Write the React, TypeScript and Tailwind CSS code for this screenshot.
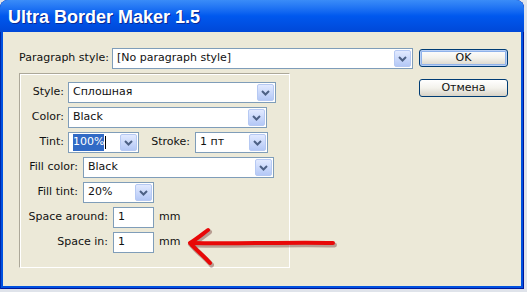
import React from "react";

const Chevron = () => (
  <svg width="9" height="6" viewBox="0 0 9 6">
    <path d="M1 1l3.5 3.5L8 1" fill="none" stroke="#4d6185" strokeWidth="2" />
  </svg>
);

function Select({
  width,
  children,
}: {
  width: string;
  children: React.ReactNode;
}) {
  return (
    <div className={`flex h-[21px] border border-[#7f9db9] bg-white ${width}`}>
      <div className="flex flex-1 items-center overflow-hidden pl-[4px] whitespace-nowrap">
        {children}
      </div>
      <div className="m-[1px] flex w-[17px] items-center justify-center rounded-[2px] border border-[#b6c9f3] bg-gradient-to-b from-[#e2eaff] to-[#b4c8f6]">
        <Chevron />
      </div>
    </div>
  );
}

function Input({ value }: { value: string }) {
  return (
    <div className="flex h-[21px] w-[41px] items-center border border-[#7f9db9] bg-white pl-[4px]">
      {value}
    </div>
  );
}

function XpButton({ label, main }: { label: string; main?: boolean }) {
  return (
    <div
      className={`flex h-[18px] w-[89px] items-center justify-center rounded-[3px] border border-[#003c74] bg-gradient-to-b from-[#ffffff] via-[#f3f2ec] to-[#d8d3c7] ${
        main ? "shadow-[inset_0_0_0_1px_#b9d0f5,inset_0_0_0_2px_#8fb2ea]" : ""
      }`}
    >
      {label}
    </div>
  );
}

export default function App() {
  return (
    <div className="relative h-[292px] w-[527px] overflow-hidden bg-[#dfe3ea] font-['DejaVu_Sans',sans-serif] text-[11px] text-[#111]">
      <div className="flex h-[289px] w-[524px] flex-col rounded-t-[8px] bg-[#0051e0] shadow-[inset_1px_0_0_#0027a8,inset_-1px_0_0_#00179a,inset_0_-1px_0_#00179a]">
        {/* title bar */}
        <div className="flex h-[32px] items-center rounded-t-[8px] bg-gradient-to-b from-[#3a8cf8] via-[#0058ee] to-[#0048d8] pl-[8px] pt-[3px] font-['Liberation_Sans',sans-serif] text-[18px] font-bold text-white [text-shadow:1px_1px_0_#0a2a95]">
          Ultra Border Maker 1.5
        </div>

        {/* body */}
        <div className="mx-[3px] mb-[3px] flex flex-1 gap-[6px] bg-[#ece9d8] pl-[16px] pt-[16px]">
          <div className="flex flex-col">
            <div className="flex h-[21px] items-center">
              <div className="w-[93px]">Paragraph style:</div>
              <Select width="w-[301px]">[No paragraph style]</Select>
            </div>

            <div className="mt-[4px] flex h-[195px] w-[271px] flex-col gap-[4px] border border-b-white border-l-[#aca899] border-r-white border-t-[#aca899] pt-[8px] shadow-[inset_1px_1px_0_#fff]">
              <div className="flex items-center">
                <div className="w-[44px] text-right">Style:</div>
                <div className="ml-[4px]">
                  <Select width="w-[208px]">Сплошная</Select>
                </div>
              </div>
              <div className="flex items-center">
                <div className="w-[44px] text-right">Color:</div>
                <div className="ml-[4px]">
                  <Select width="w-[199px]">Black</Select>
                </div>
              </div>
              <div className="flex items-center">
                <div className="w-[44px] text-right">Tint:</div>
                <div className="ml-[4px]">
                  <Select width="w-[71px]">
                    <span className="bg-[#316ac5] text-white">100%</span>
                    <span className="ml-[1px] inline-block h-[13px] w-[1px] bg-black" />
                  </Select>
                </div>
                <div className="w-[51px] text-right">Stroke:</div>
                <div className="ml-[5px]">
                  <Select width="w-[73px]">1 пт</Select>
                </div>
              </div>
              <div className="flex items-center">
                <div className="w-[58px] text-right">Fill color:</div>
                <div className="ml-[5px]">
                  <Select width="w-[191px]">Black</Select>
                </div>
              </div>
              <div className="flex items-center">
                <div className="w-[58px] text-right">Fill tint:</div>
                <div className="ml-[5px]">
                  <Select width="w-[71px]">20%</Select>
                </div>
              </div>
              <div className="flex items-center">
                <div className="w-[88px] text-right">Space around:</div>
                <div className="ml-[5px]">
                  <Input value="1" />
                </div>
                <div className="ml-[5px]">mm</div>
              </div>
              <div className="flex items-center">
                <div className="w-[88px] text-right">Space in:</div>
                <div className="ml-[5px]">
                  <Input value="1" />
                </div>
                <div className="ml-[5px]">mm</div>
              </div>
            </div>
          </div>

          <div className="mt-[1px] flex flex-col gap-[12px]">
            <XpButton label="OK" main />
            <XpButton label="Отмена" />
          </div>
        </div>
      </div>

      {/* red arrow drawn over the dialog */}
      <svg
        className="pointer-events-none absolute left-0 top-0"
        width="527"
        height="292"
        viewBox="0 0 527 292"
      >
        <g fill="none" stroke="#5a1010" strokeOpacity="0.35" strokeWidth="5" strokeLinecap="round" transform="translate(1.5 2)">
          <path d="M333 243 C 290 242, 240 244, 191 243" />
          <path d="M208 230 C 200 236, 195 240, 190 243 C 196 250, 204 256, 210 263" />
        </g>
        <g fill="none" stroke="#e80808" strokeWidth="4" strokeLinecap="round" strokeLinejoin="round">
          <path d="M333 243 C 290 242, 240 244, 191 243" />
          <path d="M208 230 C 200 236, 195 240, 190 243 C 196 250, 204 256, 210 263" />
        </g>
      </svg>
    </div>
  );
}
